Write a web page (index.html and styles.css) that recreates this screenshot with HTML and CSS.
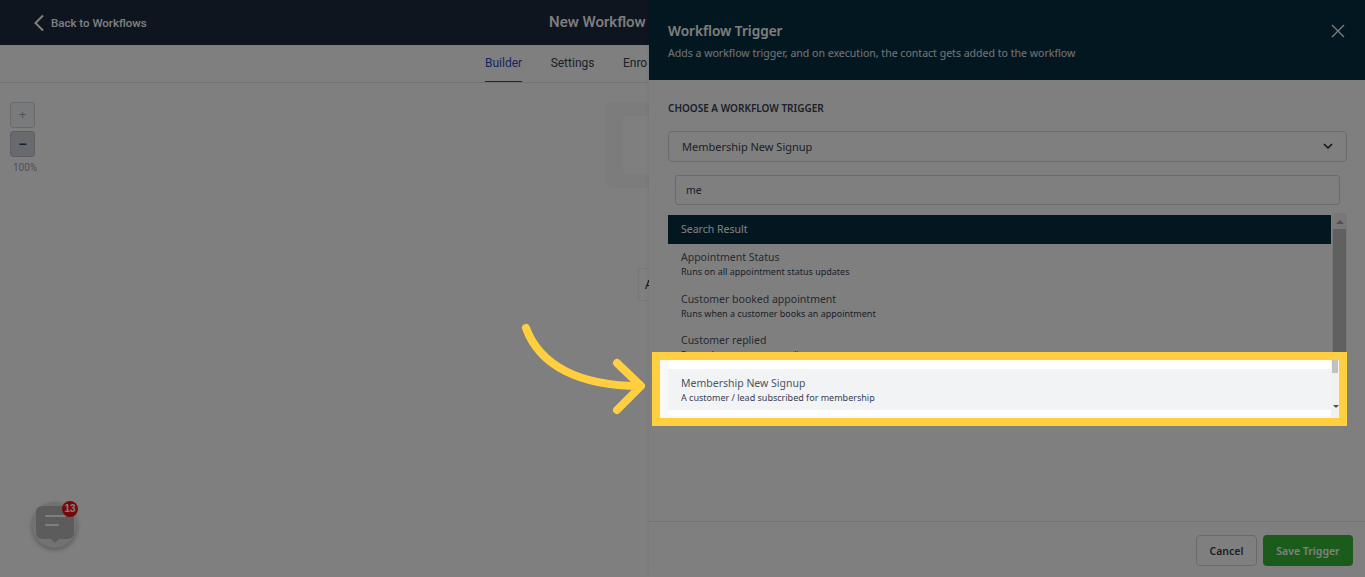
FILE: index.html
```html
<!DOCTYPE html>
<html lang="en">

<head>
  <meta charset="UTF-8">
  <meta name="viewport" content="width=device-width, initial-scale=1.0">
  <title>Workflow Trigger</title>
  <link rel="stylesheet" href="styles.css">
</head>

<body>
  <div class="page">
    <div class="topbar">
      <a class="back">
        <svg width="12" height="18" viewBox="0 0 12 18"><path d="M10 1.500 2.500 9l7.500 7.500" fill="none" stroke="#fff" stroke-width="2"/></svg>
        Back to Workflows
      </a>
      <div class="wf-name">New Workflow</div>
    </div>
    <div class="tabs">
      <span class="tab active">Builder</span>
      <span class="tab">Settings</span>
      <span class="tab">Enro</span>
    </div>
    <div class="canvas">
      <div class="zoom-tools">
        <button class="zoom-btn">+</button>
        <button class="zoom-btn dark">&minus;</button>
        <span class="zoom-label">100%</span>
      </div>
      <div class="start-node"><div class="start-inner"></div></div>
      <div class="add-node">A</div>
      <div class="chat">
        <svg width="40" height="40" viewBox="0 0 40 40">
          <path d="M7 1h26a6 6 0 0 1 6 6v21a6 6 0 0 1-6 6h-9l-4 4-4-4H7a6 6 0 0 1-6-6V7a6 6 0 0 1 6-6z" fill="#b8b8b8"/>
          <path d="M11 11h19M11 20h12" stroke="#fff" stroke-width="2" stroke-linecap="round"/>
        </svg>
        <span class="chat-count">13</span>
      </div>
    </div>
  </div>

  <aside class="drawer">
    <header class="drawer-head">
      <div>
        <h2>Workflow Trigger</h2>
        <p>Adds a workflow trigger, and on execution, the contact gets added to the workflow</p>
      </div>
      <svg class="close" width="14" height="14" viewBox="0 0 14 14"><path d="M1 1l12 12M13 1 1 13" stroke="#fff" stroke-width="1.300"/></svg>
    </header>
    <div class="drawer-body">
      <label class="field-label">CHOOSE A WORKFLOW TRIGGER</label>
      <div class="select">
        Membership New Signup
        <svg width="10" height="7" viewBox="0 0 10 7"><path d="M1 1l4 4 4-4" fill="none" stroke="#222" stroke-width="1.500"/></svg>
      </div>
      <div class="dropdown">
        <div class="search-wrap"><div class="search">me</div></div>
        <div class="list-wrap">
          <ul class="list">
            <li class="list-head">Search Result</li>
            <li class="item"><b>Appointment Status</b><small>Runs on all appointment status updates</small></li>
            <li class="item"><b>Customer booked appointment</b><small>Runs when a customer books an appointment</small></li>
            <li class="item"><b>Customer replied</b><small>Runs when a customer replies to a message</small></li>
          </ul>
          <div class="scrollbar">
            <span class="scroll-up"></span>
            <span class="scroll-thumb"></span>
          </div>
        </div>
      </div>
    </div>
    <footer class="drawer-foot">
      <button class="btn">Cancel</button>
      <button class="btn primary">Save Trigger</button>
    </footer>
  </aside>

  <div class="scrim"></div>

  <div class="highlight">
    <div class="hl-row">
      <div class="hl-card">
        <div class="hl-item"><b>Membership New Signup</b><small>A customer / lead subscribed for membership</small></div>
      </div>
    </div>
    <div class="hl-scroll"><span class="hl-thumb"></span><span class="hl-down"></span></div>
  </div>

  <svg class="arrow" width="130" height="100" viewBox="0 0 130 100">
    <path d="M6 8C20 46 60 66 120 66M97 43l24 23-24 24" fill="none" stroke="#ffcf3f" stroke-width="8" stroke-linecap="round" stroke-linejoin="round"/>
  </svg>
</body>

</html>
```

FILE: styles.css
```css
* {
  box-sizing: border-box;
  margin: 0;
  padding: 0;
}

html, body {
  height: 577px;
  overflow: hidden;
  background-color: #fff;
  font-family: "Noto Sans", sans-serif;
}

.page {
  height: 577px;
  display: flex;
  flex-direction: column;
}

.topbar {
  height: 45px;
  background-color: #1c2a3e;
  color: #fff;
  display: flex;
  align-items: center;
  position: relative;
  padding-left: 33px;
}

.back {
  display: flex;
  align-items: center;
  gap: 6px;
  font-family: Roboto, sans-serif;
  font-size: 11.500px;
  font-weight: 500;
}

.wf-name {
  position: absolute;
  left: 549px;
  top: 13px;
  font-family: Roboto, sans-serif;
  font-size: 15px;
  font-weight: 500;
  white-space: nowrap;
}

.tabs {
  height: 38px;
  width: 649px;
  border-bottom: 1px solid #e5e7eb;
  display: flex;
  gap: 28.500px;
  padding-left: 485px;
  font-family: Roboto, sans-serif;
  font-size: 12px;
}

.tab {
  color: #374151;
  height: 37px;
  line-height: 36px;
  white-space: nowrap;
}

.tab.active {
  color: #2a4bb8;
  border-bottom: 1px solid #2a4bb8;
}

.canvas {
  flex: 1;
  position: relative;
}

.zoom-tools {
  position: absolute;
  left: 10px;
  top: 19px;
  width: 30px;
  display: flex;
  flex-direction: column;
  gap: 3px;
  align-items: flex-start;
}

.zoom-btn {
  width: 25px;
  height: 26px;
  border: 1px solid #d1d5db;
  border-radius: 3px;
  background-color: #f3f4f6;
  color: #9ca3af;
  font-size: 12px;
}

.zoom-btn.dark {
  background-color: #d1d5db;
  border-color: #b8bdc6;
  color: #374151;
  font-size: 14px;
  font-weight: 700;
}

.zoom-label {
  font-family: Roboto, sans-serif;
  font-size: 10px;
  line-height: 14px;
  margin-top: 1px;
  color: #9ca3af;
  padding-left: 3px;
}

.start-node {
  position: absolute;
  left: 606px;
  top: 19px;
  width: 100px;
  height: 86px;
  background-color: #f8f8f9;
  border-radius: 5px;
  padding: 14px 17px;
}

.start-inner {
  height: 58px;
  background-color: #fff;
  border-radius: 4px;
}

.add-node {
  position: absolute;
  left: 638px;
  top: 185px;
  width: 11px;
  height: 33px;
  border: 1px solid #f0f0f0;
  border-right: none;
  border-radius: 3px 0 0 3px;
  padding: 7px 0 0 6px;
  font-size: 12px;
  color: #111;
}

.chat {
  position: absolute;
  left: 32px;
  top: 419px;
  width: 45px;
  height: 46px;
  border-radius: 50%;
  background-color: #e4e4e4;
  box-shadow: 0 2px 5px rgba(0, 0, 0, .3);
  display: flex;
  align-items: center;
  justify-content: center;
}

.chat-count {
  position: absolute;
  right: -1px;
  top: -1px;
  width: 16px;
  height: 16px;
  border-radius: 50%;
  background-color: #f00f0f;
  color: #fff;
  font-family: "Liberation Sans", sans-serif;
  font-size: 10px;
  font-weight: 700;
  line-height: 16px;
  text-align: center;
}

.drawer {
  position: absolute;
  left: 649px;
  top: 0;
  width: 716px;
  height: 577px;
  background-color: #fff;
  box-shadow: -1px 0 3px rgba(0, 0, 0, .06);
  display: flex;
  flex-direction: column;
}

.drawer-head {
  height: 80px;
  background-color: #062e40;
  color: #fff;
  display: flex;
  justify-content: space-between;
  padding: 22px 20px 0 19px;
}

.drawer-head h2 {
  font-size: 13.600px;
  font-weight: 600;
  line-height: 18px;
}

.drawer-head p {
  font-size: 10.550px;
  line-height: 14px;
  margin-top: 6px;
  color: #e5e7eb;
}

.close {
  margin-top: 2px;
}

.drawer-body {
  flex: 1;
  padding: 21px 18px 0 19px;
}

.field-label {
  display: block;
  font-size: 10px;
  font-weight: 600;
  color: #374151;
  line-height: 14px;
}

.select {
  height: 31px;
  margin-top: 16px;
  border: 1px solid #d1d5db;
  border-radius: 4px;
  display: flex;
  align-items: center;
  justify-content: space-between;
  padding: 0 13px;
  font-size: 11px;
  color: #374151;
}

.dropdown {
  margin-top: 13px;
  height: 254px;
}

.search-wrap {
  padding: 0 7px;
}

.search {
  height: 30px;
  border: 1px solid #d1d5db;
  border-radius: 3px;
  padding: 0 10px;
  line-height: 28px;
  font-size: 10.500px;
  color: #374151;
}

.list-wrap {
  display: flex;
  margin-top: 8px;
  height: 180px;
  overflow: hidden;
}

.list {
  flex: 1;
  list-style: none;
  padding-top: 2px;
}

.list-head {
  height: 29px;
  background-color: #062e40;
  color: #fff;
  font-size: 10.500px;
  line-height: 28px;
  padding-left: 13px;
}

.item {
  height: 41.500px;
  padding: 6px 13px 0;
}

.item b, .hl-item b {
  display: block;
  font-size: 10.500px;
  font-weight: 400;
  line-height: 15px;
  color: #4b5563;
}

.item small, .hl-item small {
  display: block;
  font-size: 9px;
  line-height: 13px;
  color: #374151;
}

.scrollbar {
  width: 15px;
  margin-left: 1px;
  background-color: #f1f1f1;
  display: flex;
  flex-direction: column;
  align-items: center;
  padding-top: 7px;
}

.scroll-up {
  width: 0;
  height: 0;
  border-left: 4px solid transparent;
  border-right: 4px solid transparent;
  border-bottom: 4px solid #a3a3a3;
}

.scroll-thumb {
  width: 13px;
  flex: 1;
  margin-top: 5px;
  background-color: #c1c1c1;
}

.drawer-foot {
  height: 56px;
  border-top: 1px solid #e5e7eb;
  display: flex;
  justify-content: flex-end;
  gap: 6px;
  padding: 13px 12px 0 0;
}

.btn {
  height: 31px;
  width: 61px;
  border: 1px solid #d1d5db;
  border-radius: 4px;
  background-color: #fff;
  color: #374151;
  font-family: "Noto Sans", sans-serif;
  font-size: 10.500px;
  font-weight: 600;
}

.btn.primary {
  width: 90px;
  border: none;
  background-color: #37b935;
  color: #fff;
}

.scrim {
  position: fixed;
  inset: 0;
  background-color: rgba(0, 0, 0, .5);
}

.highlight {
  position: absolute;
  left: 652px;
  top: 352px;
  width: 695px;
  height: 74px;
  border: 8px solid #ffcf3f;
  background-color: #f8f8f8;
  display: flex;
}

.hl-row {
  flex: 1;
  padding: 0 0 2px 8px;
}

.hl-card {
  height: 56px;
  padding-top: 9px;
  background-color: #fff;
  border-radius: 0 0 0 5px;
}

.hl-item {
  height: 41px;
  background-color: #f2f3f5;
  padding: 7px 13px 0;
}

.hl-scroll {
  width: 8px;
  background-color: #f1f1f1;
  position: relative;
}

.hl-thumb {
  display: block;
  width: 6px;
  height: 13px;
  margin-left: 1px;
  background-color: #c1c1c1;
}

.hl-down {
  position: absolute;
  left: 2px;
  bottom: 10px;
  width: 0;
  height: 0;
  border-left: 3px solid transparent;
  border-right: 3px solid transparent;
  border-top: 3px solid #505050;
}

.arrow {
  position: absolute;
  left: 520px;
  top: 320px;
}
```
